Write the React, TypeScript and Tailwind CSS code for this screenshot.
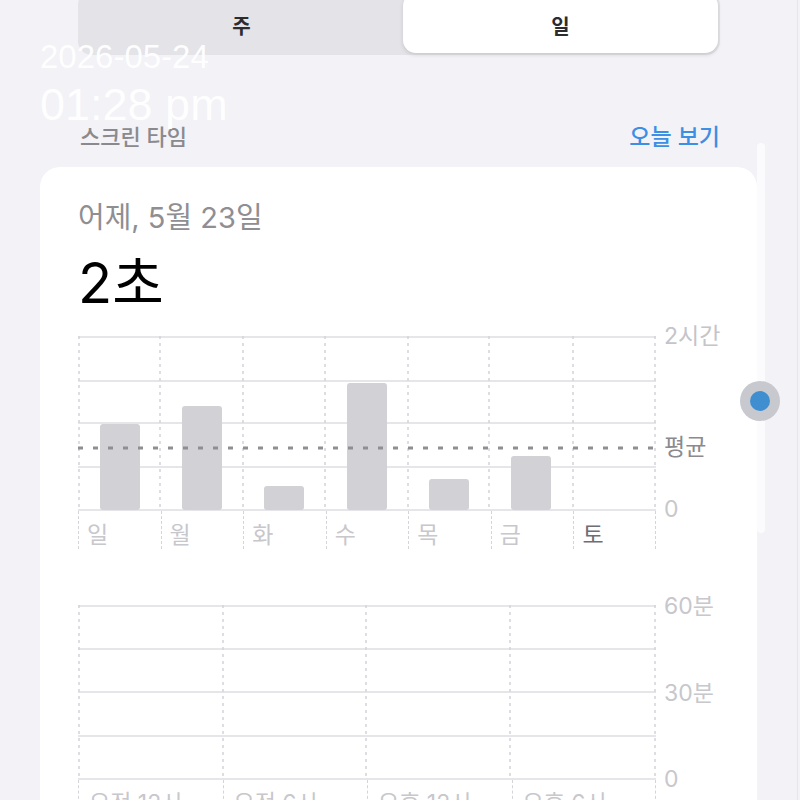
const FONT = "font-['Inter','Noto_Sans_CJK_KR',sans-serif]";

const days = ['일', '월', '화', '수', '목', '금', '토'];
const hours = ['오전 12시', '오전 6시', '오후 12시', '오후 6시'];

// bar x in plot coords, top in plot coords (plot bottom = 174)
const bars = [
  { x: 22, top: 88 },
  { x: 104, top: 70 },
  { x: 186, top: 150 },
  { x: 269, top: 47 },
  { x: 351, top: 143 },
  { x: 433, top: 120 },
];

const hLines = [1, 45, 87, 131, 174];
const hLines2 = [1, 44, 87, 131, 174];
const vLines = [1, 82, 165, 247, 330, 411, 495, 577];
const vLines2 = [1, 145, 288, 432, 577];

const Grid = ({ rows, cols }: { rows: number[]; cols: number[] }) => (
  <>
    {rows.map((y) => (
      <line key={'h' + y} x1={0} x2={578} y1={y} y2={y} stroke="#e5e5ea" strokeWidth={2} />
    ))}
    {cols.map((x) => (
      <line
        key={'v' + x}
        x1={x}
        x2={x}
        y1={0}
        y2={175}
        stroke="#d4d4d9"
        strokeWidth={1.5}
        strokeDasharray="3 4"
      />
    ))}
  </>
);

const WeekChart = () => (
  <div>
    <div className="flex h-[175px] gap-2">
      <svg width="578" height="175" className="block">
        <Grid rows={hLines} cols={vLines} />
        {bars.map((b) => (
          <rect key={b.x} x={b.x} y={b.top} width={40} height={174 - b.top} rx={3} fill="#d1d1d6" />
        ))}
        <line x1={0} x2={578} y1={112} y2={112} stroke="#8e8e93" strokeWidth={3} strokeDasharray="5 10" />
      </svg>
      <div className="-mb-[22px] -mt-[12px] flex flex-col text-[23px] leading-[24px]">
        <span className="text-[#c4c4c9]">2시간</span>
        <span className="mt-[87px] text-[#8a8a8f]">평균</span>
        <span className="mt-[38px] text-[#c7c7cc]">0</span>
      </div>
    </div>
    <div className="grid h-[38px] w-[578px] grid-cols-7">
      {days.map((d, i) => (
        <div
          key={d}
          className={`border-l-[1.5px] border-dashed border-[#d4d4d9] pl-[8px] pt-[11px] text-[23px] leading-[26px] ${
            i === 6 ? 'border-r-[1.5px] text-[#6e6e73]' : 'text-[#c7c7cc]'
          }`}
        >
          {d}
        </div>
      ))}
    </div>
  </div>
);

const DayChart = () => (
  <div className="mt-[56px]">
    <div className="flex h-[175px] gap-2">
      <svg width="578" height="175" className="block">
        <Grid rows={hLines2} cols={vLines2} />
      </svg>
      <div className="-mb-[11px] -mt-[11px] flex h-[197px] flex-col justify-between text-[23px] leading-[24px] text-[#c7c7cc]">
        <span>60분</span>
        <span>30분</span>
        <span>0</span>
      </div>
    </div>
    <div className="grid h-[40px] w-[578px] grid-cols-4">
      {hours.map((h, i) => (
        <div
          key={h}
          className={`border-l-[1.5px] border-dashed border-[#d4d4d9] pl-[10px] pt-[10px] text-[23px] leading-[26px] text-[#c7c7cc] ${
            i === 3 ? 'border-r-[1.5px]' : ''
          }`}
        >
          {h}
        </div>
      ))}
    </div>
  </div>
);

export default function App() {
  return (
    <div className={`relative h-[800px] w-[800px] overflow-hidden bg-[#f2f2f7] ${FONT}`}>
      {/* segmented control */}
      <div className="-mt-[9px] ml-[78px] flex h-[64px] w-[642px] rounded-[14px] bg-[#e3e3e8] p-[2px]">
        <div className="flex flex-1 items-center justify-center pt-[8px] text-[20px] font-semibold text-[#2c2c2e]">
          주
        </div>
        <div className="flex w-[315px] items-center justify-center rounded-[13px] bg-white pt-[8px] text-[20px] font-semibold text-[#2c2c2e] shadow-[0_2px_4px_rgba(0,0,0,0.12)]">
          일
        </div>
      </div>

      {/* section header */}
      <div className="mt-[70px] flex w-[720px] items-center justify-between pl-[80px]">
        <span className="text-[22px] font-medium leading-[24px] text-[#8a8a8e]">스크린 타임</span>
        <span className="text-[23px] font-medium leading-[24px] text-[#3d8fe3]">오늘 보기</span>
      </div>

      {/* card */}
      <div className="ml-[40px] mt-[18px] h-[700px] w-[717px] rounded-[20px] bg-white pl-[38px] pt-[36px]">
        <div className="text-[29px] leading-[30px] text-[#8e8e93]">어제, 5월 23일</div>
        <div className="mt-[22px] text-[56px] leading-[56px] text-black">2초</div>
        <div className="mt-[25px]">
          <WeekChart />
          <DayChart />
        </div>
      </div>

      {/* scroll track + indicator */}
      <div className="absolute left-[757px] top-[143px] h-[390px] w-[8px] rounded-full bg-white/70" />
      <div className="absolute right-[2px] top-0 h-[800px] w-px bg-[#e6e6ec]" />
      <div className="absolute left-[740px] top-[381px] flex h-[40px] w-[40px] items-center justify-center rounded-full bg-[#c7c9ce]">
        <div className="h-[20px] w-[20px] rounded-full bg-[#3f8fd0]" />
      </div>

      {/* timestamp overlay */}
      <div className="absolute left-[40px] top-[38px] font-['Liberation_Sans',sans-serif] text-white/95">
        <div className="text-[33px] leading-[38px]">2026-05-24</div>
        <div className="mt-[4px] text-[45px] leading-[50px]">01:28 pm</div>
      </div>
    </div>
  );
}
